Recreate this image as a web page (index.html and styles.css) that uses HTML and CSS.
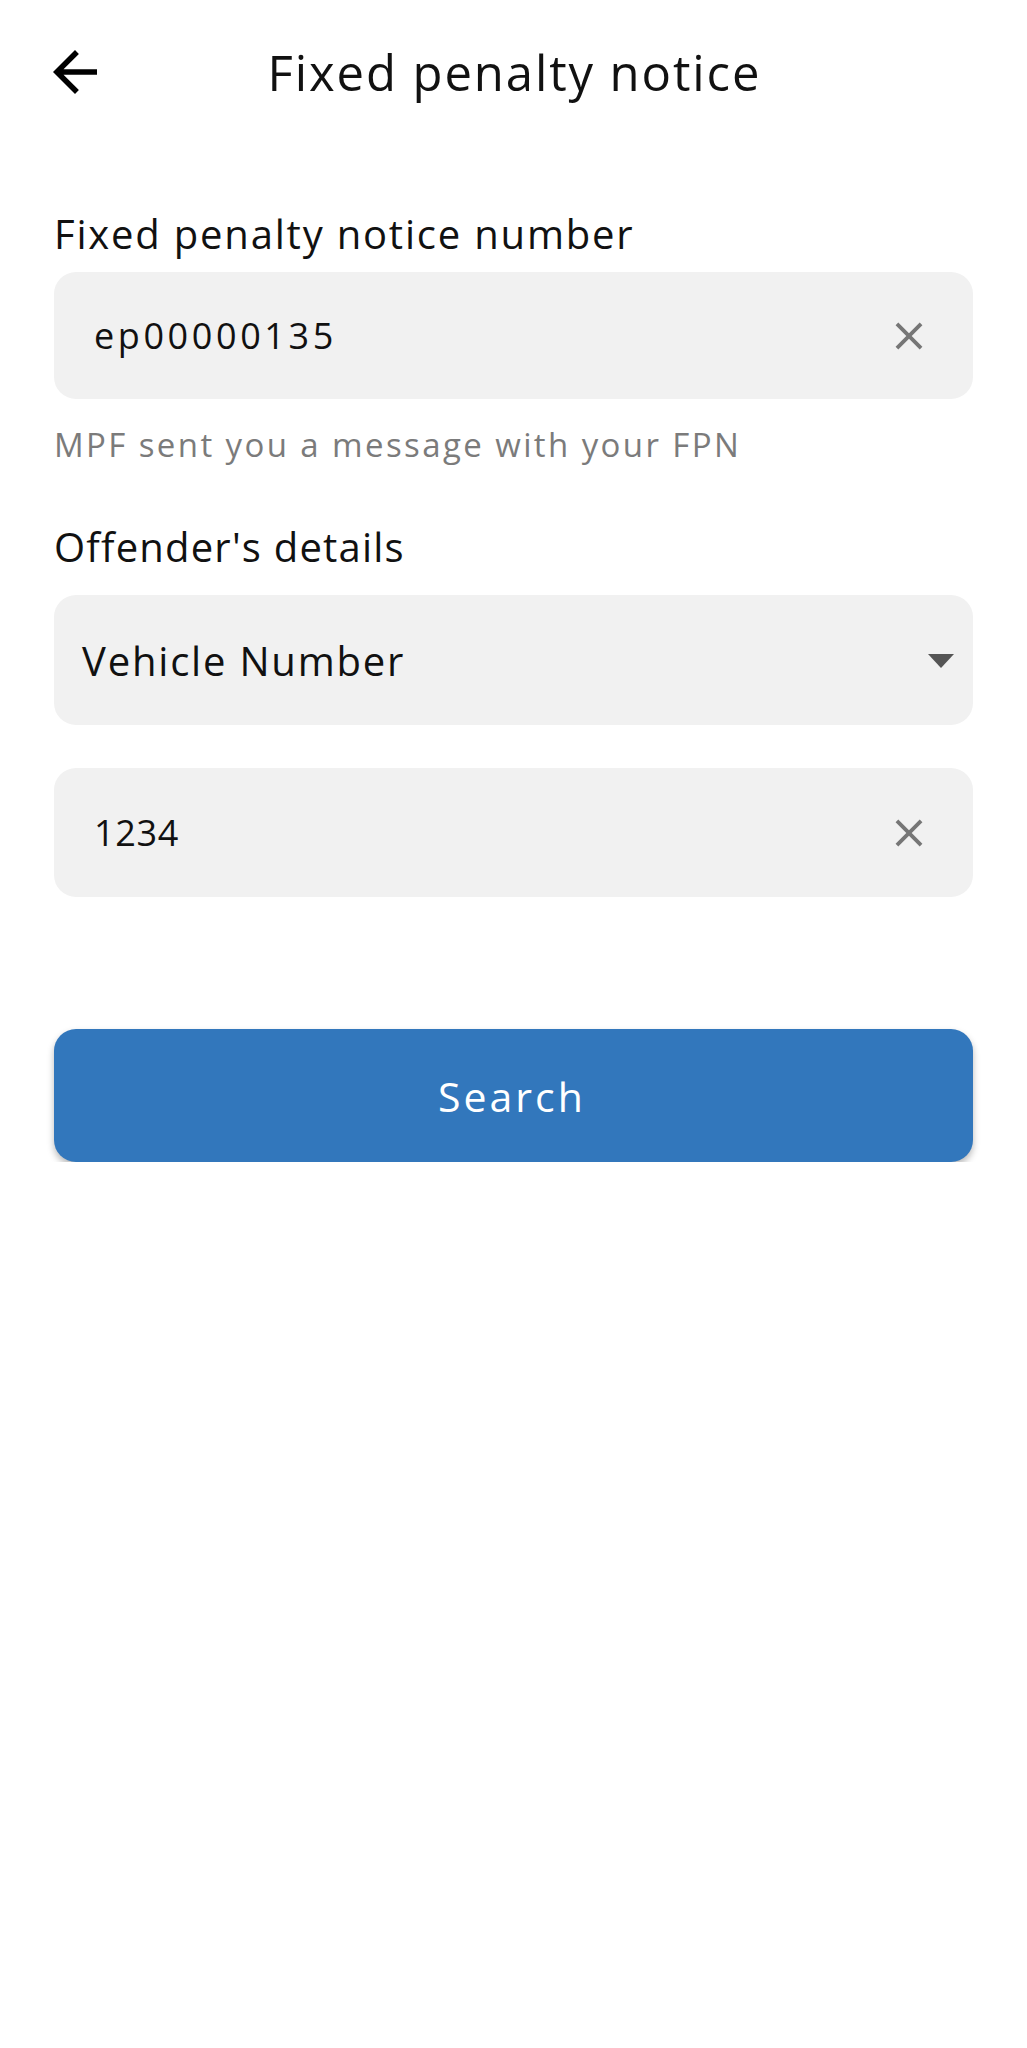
FILE: index.html
```html
<!DOCTYPE html>
<html lang="en">
<head>
    <meta charset="UTF-8">
    <meta name="viewport" content="width=device-width, initial-scale=1.0">
    <title>Fixed penalty notice</title>
    <link rel="stylesheet" href="styles.css">
</head>
<body>
    <div class="header">
        <button class="back-btn" aria-label="Back">
            <svg viewBox="0 0 24 24" width="66" height="66"><path d="M20 11H7.83l5.59-5.59L12 4l-8 8 8 8 1.41-1.41L7.83 13H20v-2z" fill="#000"/></svg>
        </button>
        <h1>Fixed penalty notice</h1>
        <div></div>
    </div>

    <div class="container">
        <label class="field-label" for="fpnNumber">Fixed penalty notice number</label>
        <div class="field">
            <input type="text" id="fpnNumber" class="input-code" value="ep00000135">
            <span class="clear-btn">
                <svg viewBox="0 0 24 24" width="46" height="46"><path d="M19 6.41L17.59 5 12 10.59 6.41 5 5 6.41 10.59 12 5 17.59 6.41 19 12 13.41 17.59 19 19 17.59 13.41 12z" fill="#767676"/></svg>
            </span>
        </div>
        <p class="hint">MPF sent you a message with your FPN</p>

        <label class="field-label label-offender" for="offenderType">Offender's details</label>
        <div class="field select-field" id="offenderType">
            <span class="select-value">Vehicle Number</span>
            <span class="caret"></span>
        </div>

        <div class="field field-second">
            <input type="text" id="vehicleNumber" class="input-number" value="1234">
            <span class="clear-btn">
                <svg viewBox="0 0 24 24" width="46" height="46"><path d="M19 6.41L17.59 5 12 10.59 6.41 5 5 6.41 10.59 12 5 17.59 6.41 19 12 13.41 17.59 19 19 17.59 13.41 12z" fill="#767676"/></svg>
            </span>
        </div>

        <button class="search-btn" id="searchBtn">Search</button>
    </div>
</body>
</html>
```

FILE: styles.css
```css
body {
    font-family: "Open Sans", "DejaVu Sans", sans-serif;
    margin: 0;
    padding: 0;
    background-color: #fff;
    color: #111;
}
.header {
    display: grid;
    grid-template-columns: 1fr auto 1fr;
    align-items: center;
    height: 144px;
}
.back-btn {
    justify-self: start;
    margin-left: 42px;
    padding: 0;
    border: none;
    background: none;
    width: 66px;
    height: 66px;
}
.back-btn svg {
    display: block;
}
h1 {
    margin: 0 0 0 2px;
    font-size: 49px;
    font-weight: 400;
    line-height: 60px;
    letter-spacing: 1.9px;
    color: #111;
}
.container {
    padding: 0 54px;
}
.field-label {
    display: block;
    margin-top: 66px;
    font-size: 40px;
    line-height: 48px;
    letter-spacing: 1.8px;
    color: #111;
}
.field {
    display: flex;
    align-items: center;
    height: 127px;
    margin-top: 14px;
    background: #f1f1f1;
    border-radius: 22px;
}
.field input {
    flex: 1;
    min-width: 0;
    height: 100%;
    padding: 0 0 0 40px;
    border: none;
    background: transparent;
    font-family: inherit;
    font-size: 36px;
    color: #111;
    outline: none;
}
.input-code {
    letter-spacing: 3.6px;
}
.input-number {
    letter-spacing: 0.7px;
}
.clear-btn {
    margin-right: 41px;
    width: 46px;
    height: 46px;
}
.clear-btn svg {
    display: block;
}
.hint {
    margin: 26px 0 0;
    font-size: 33px;
    line-height: 40px;
    letter-spacing: 2.4px;
    color: #7b7b7b;
}
.label-offender {
    margin-top: 58px;
    letter-spacing: 1.2px;
}
.select-field {
    height: 130px;
    margin-top: 24px;
    padding: 0 19px 0 28px;
    justify-content: space-between;
}
.select-value {
    font-size: 40px;
    letter-spacing: 1.8px;
    color: #111;
}
.caret {
    width: 0;
    height: 0;
    border-left: 13px solid transparent;
    border-right: 13px solid transparent;
    border-top: 14px solid #555;
    margin-top: 2px;
}
.field-second {
    height: 129px;
    margin-top: 43px;
}
.search-btn {
    display: block;
    width: 100%;
    height: 133px;
    margin-top: 132px;
    padding-left: 3px;
    border: none;
    border-radius: 22px;
    background-color: #3277bc;
    box-shadow: 0 4px 7px rgba(0, 0, 0, 0.28);
    color: #fff;
    font-family: inherit;
    font-size: 41px;
    letter-spacing: 3px;
    cursor: pointer;
}
```
